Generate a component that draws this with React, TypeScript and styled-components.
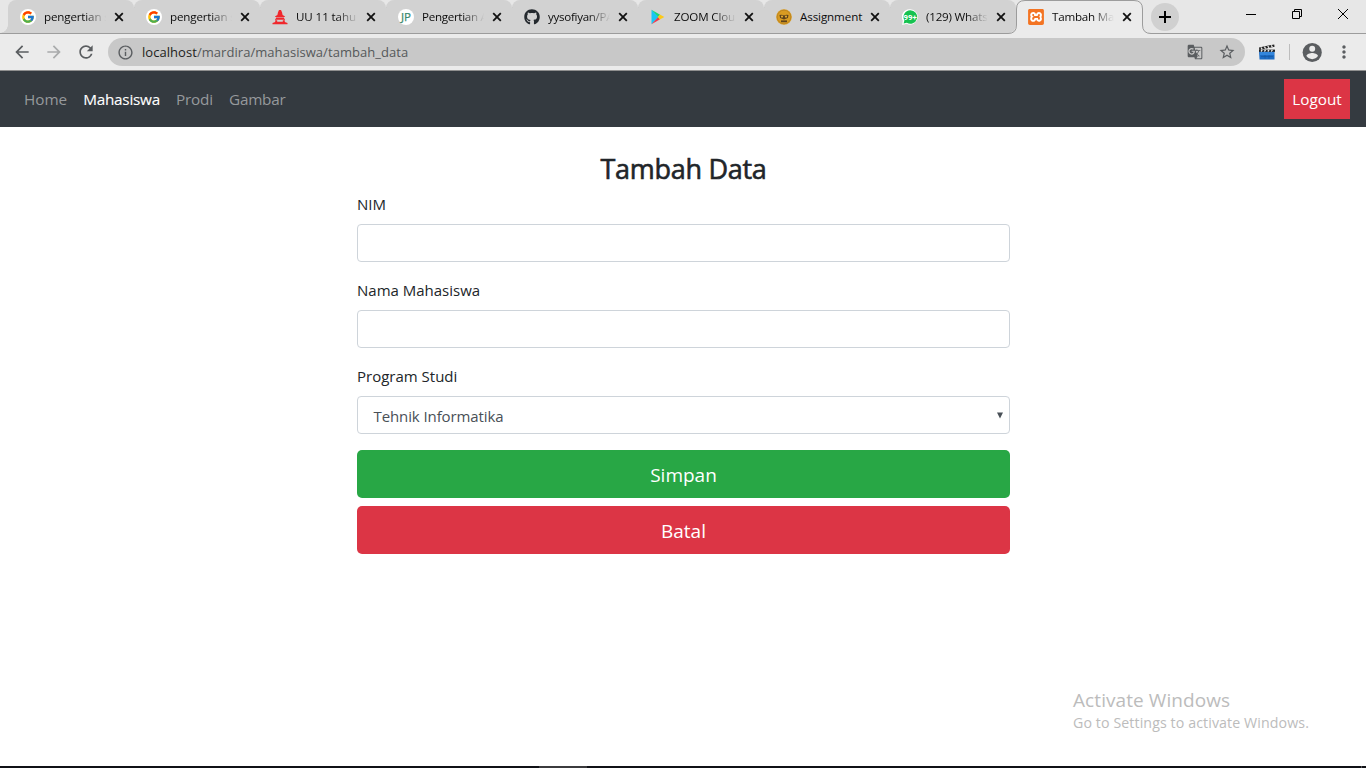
import React from "react";
import styled, { createGlobalStyle, css } from "styled-components";
import { FcGoogle } from "react-icons/fc";
import { FaGithub } from "react-icons/fa";
import { SiXampp } from "react-icons/si";
import {
  MdArrowBack,
  MdArrowForward,
  MdRefresh,
  MdInfoOutline,
  MdStarBorder,
  MdMoreVert,
  MdGTranslate,
} from "react-icons/md";

const GlobalStyle = createGlobalStyle`
  * { box-sizing: border-box; }
  body {
    margin: 0;
    background: #fff;
    font-family: "Open Sans", "Noto Sans", sans-serif;
    overflow: hidden;
  }
  svg { flex: none; }
`;

const Screen = styled.div`
  position: relative;
  display: flex;
  flex-direction: column;
  width: 1366px;
  height: 768px;
`;

const TabStrip = styled.div`
  display: flex;
  height: 34px;
  padding-left: 8px;
  background: #e7e7e7;
  border-bottom: 1px solid #9c9c9c;
`;

const Tab = styled.div<{ $active?: boolean; $first?: boolean; $last?: boolean }>`
  position: relative;
  display: flex;
  align-items: center;
  flex: none;
  width: 126px;
  height: 33px;
  padding-left: 12px;
  background: #d2d2d2;
  border-radius: 8px 8px 0 0;
  ${(p) =>
    p.$first &&
    css`
      &::before {
        content: "";
        position: absolute;
        left: -8px;
        bottom: 0;
        width: 8px;
        height: 8px;
        background: radial-gradient(circle at 0 0, transparent 7.5px, #d2d2d2 8px);
      }
    `}
  ${(p) =>
    p.$last &&
    css`
      border-radius: 8px 8px 8px 0;
    `}
  ${(p) =>
    p.$active &&
    css`
      height: 34px;
      padding-bottom: 1px;
      background: none;
    `}
`;

const TabSeparator = styled.span`
  position: absolute;
  right: -1px;
  top: 7px;
  width: 1px;
  height: 20px;
  background: #828282;
`;

const TabShape = styled.svg`
  position: absolute;
  left: -8px;
  top: 0;
`;

const Favicon = styled.span`
  position: relative;
  display: flex;
  align-items: center;
  justify-content: center;
  flex: none;
  width: 16px;
  height: 16px;
  margin-right: 8px;
`;

const CloseButton = styled.span`
  position: relative;
  display: flex;
  flex: none;
`;

const TabTitle = styled.span<{ $track: number; $whole?: boolean }>`
  position: relative;
  flex: none;
  width: ${(p) => (p.$whole ? 64 : 62)}px;
  margin-right: ${(p) => (p.$whole ? 3 : 5)}px;
  overflow: hidden;
  white-space: nowrap;
  font-size: 11.6px;
  line-height: 18px;
  letter-spacing: ${(p) => p.$track}px;
  color: #0c0c0c;
  ${(p) =>
    !p.$whole &&
    css`
      mask-image: linear-gradient(to right, #000 40px, transparent 62px);
    `}
`;

const NewTab = styled.div`
  display: flex;
  align-items: center;
  justify-content: center;
  width: 28px;
  height: 28px;
  margin: 3px 0 0 9px;
  border-radius: 50%;
  background: #d0d0d0;
`;

const WindowControls = styled.div`
  display: flex;
  gap: 36px;
  margin: 9px 18px 0 auto;
`;

const Toolbar = styled.div`
  display: flex;
  align-items: center;
  height: 37px;
  border-bottom: 1px solid #8f8f8f;
  background: #ebebeb;
  color: #5a5d60;
  padding-left: 12px;
`;

const ToolButton = styled.span<{ $dim?: boolean }>`
  display: flex;
  flex: none;
  width: 20px;
  margin-right: 12px;
  font-size: 20px;
  color: ${(p) => (p.$dim ? "#a9abac" : "#5a5d60")};
`;

const Omnibox = styled.div`
  display: flex;
  align-items: center;
  flex: none;
  width: 1137px;
  height: 28px;
  margin-right: 14px;
  padding: 0 9px 0 9px;
  border-radius: 14px;
  background: #c8c8c8;
`;

const OmniboxActions = styled.span`
  display: flex;
  align-items: center;
  gap: 15px;
`;

const Url = styled.span`
  flex: 1;
  margin-left: 8px;
  font-size: 13px;
  letter-spacing: 0.05px;
  color: #55585a;
  span {
    color: #1d1e20;
  }
`;

const ToolDivider = styled.span`
  width: 1px;
  height: 16px;
  margin: 0 11px 0 14px;
  background: #bdbdbd;
`;

const Profile = styled.span`
  display: flex;
  margin-right: 10px;
`;

const Navbar = styled.nav`
  display: flex;
  align-items: center;
  height: 56px;
  padding: 0 16px;
  background: #343a40;
`;

const NavLink = styled.a<{ $active?: boolean; $track: number }>`
  margin-left: 8px;
  margin-right: 8px;
  font-size: 15.3px;
  line-height: 24px;
  letter-spacing: ${(p) => p.$track}px;
  color: ${(p) => (p.$active ? "#fff" : "#96999c")};
  -webkit-text-stroke: ${(p) => (p.$active ? "0.12px #fff" : "0")};
`;

const Logout = styled.button`
  width: 66px;
  height: 40px;
  margin-left: auto;
  padding: 0;
  border: 0;
  background: #dc3545;
  color: #fff;
  font: 15.3px/24px "Open Sans", sans-serif;
`;

const Form = styled.form`
  width: 653px;
  margin: 24px 0 0 357px;
`;

const Title = styled.h3`
  margin: 0;
  height: 41px;
  padding-top: 1px;
  text-align: center;
  font-size: 27px;
  line-height: 34px;
  font-weight: 500;
  letter-spacing: -0.3px;
  -webkit-text-stroke: 0.6px #212529;
  color: #212529;
`;

const Field = styled.div`
  margin-bottom: 16px;
`;

const Label = styled.label`
  display: block;
  height: 24px;
  margin-bottom: 8px;
  font-size: 15px;
  line-height: 25px;
  color: #212529;
`;

const Control = styled.div`
  display: flex;
  align-items: center;
  justify-content: space-between;
  height: 38px;
  padding: 2px 5px 0 15.5px;
  border: 1px solid #ced4da;
  border-radius: 4px;
  background: #fff;
  font-size: 15px;
  letter-spacing: -0.1px;
  color: #495057;
`;

const BlockButton = styled.button<{ $color: string }>`
  display: block;
  width: 100%;
  height: 48px;
  margin-bottom: 8px;
  padding: 2px 0 0;
  border: 0;
  border-radius: 5px;
  background: ${(p) => p.$color};
  color: #fff;
  font-family: "Open Sans", sans-serif;
  font-size: 19px;
`;

const Watermark = styled.div`
  position: absolute;
  left: 1073px;
  top: 687px;
  color: #bcbcbc;
`;

const WatermarkTitle = styled.div`
  width: max-content;
  font-size: 19px;
  line-height: 26px;
  letter-spacing: 0.08px;
`;

const WatermarkText = styled.div`
  width: max-content;
  font-size: 14.2px;
  line-height: 19px;
  letter-spacing: 0.1px;
`;

const Taskbar = styled.div`
  display: flex;
  height: 2px;
  margin-top: auto;
  padding-left: 539px;
  background: #101116;
`;

const TaskbarItem = styled.span`
  width: 48px;
  background: #3b3b3d;
`;

const ShowDesktop = styled.span`
  width: 1px;
  margin: 0 4px 0 auto;
  background: #55565a;
`;

const CloseGlyph = () => (
  <CloseButton>
    <svg width="16" height="16" viewBox="0 0 16 16">
      <path d="M4.2 4.2l7.6 7.6M11.8 4.2l-7.6 7.6" stroke="#111" strokeWidth="1.8" />
    </svg>
  </CloseButton>
);

const GoogleMark = () => (
  <svg width="16" height="16" viewBox="0 0 16 16">
    <circle cx="8" cy="8" r="8" fill="#fff" />
    <FcGoogle x="1" y="1" size={14} />
  </svg>
);

const PagodaMark = () => (
  <svg width="16" height="16" viewBox="0 0 16 16" fill="#f0272c">
    <path d="M7 1h2l1 2.200.6 2.800 2.200 1.200v.8H3.200v-.8L5.400 6 6 3.200z" />
    <path d="M4 8.500h8v1.200h1v1H3v-1h1zM3.200 11.200h2v1.600h5.600v-1.600h2v1.800l2.700 1v1.200H.5V14l2.700-1z" />
  </svg>
);

const JpMark = () => (
  <svg width="16" height="16" viewBox="0 0 16 16">
    <circle cx="8" cy="8" r="8" fill="#fff" />
    <text x="8" y="12" textAnchor="middle" fontSize="11.500" fontFamily="Open Sans" fill="#3d8b70" stroke="#3d8b70" strokeWidth=".25">JP</text>
  </svg>
);

const PlayMark = () => (
  <svg width="16" height="16" viewBox="0 0 16 16">
    <path d="M1.500.8v14.400L8.500 8z" fill="#19c5f4" />
    <path d="M1.500.8l8.600 5L8.200 8z" fill="#16d77c" />
    <path d="M1.500 15.200l8.600-5L8.200 8z" fill="#f0384b" />
    <path d="M9.900 5.600L14.300 8l-4.400 2.400L7.800 8z" fill="#fcc917" />
  </svg>
);

const OwlMark = () => (
  <svg width="16" height="16" viewBox="0 0 16 16">
    <circle cx="8" cy="8" r="7.800" fill="#d89b22" />
    <circle cx="8" cy="8" r="6.800" fill="none" stroke="#b98120" strokeWidth=".8" />
    <path d="M3.500 6q2.500-.8 4.500.6 2-1.400 4.500-.6l-.6 3-3.900 1.600L4.100 9z" fill="#5e431b" />
    <circle cx="6" cy="7.600" r="1.100" fill="#e6ac31" />
    <circle cx="10" cy="7.600" r="1.100" fill="#e6ac31" />
    <path d="M5 12.300h6" stroke="#5e431b" strokeWidth="1.800" />
  </svg>
);

const WhatsMark = () => (
  <svg width="16" height="16" viewBox="0 0 16 16">
    <path d="M8.200.2a7.700 7.700 0 1 1-3.600 14.600L.2 16l.6-4.400A7.700 7.700 0 0 1 8.200.2z" fill="#fff" />
    <path d="M8.200 1.200a6.800 6.800 0 1 1-3.400 12.600L1.600 14.600l.8-3.200A6.800 6.800 0 0 1 8.200 1.200z" fill="#16c250" />
    <text x="8.200" y="10.800" textAnchor="middle" fontSize="7.800" fontWeight="700" fontFamily="Roboto" fill="#fff">99+</text>
  </svg>
);

const XamppMark = () => (
  <svg width="16" height="16" viewBox="0 0 16 16">
    <rect x=".5" y=".5" width="15" height="15" rx="1" fill="#fff" />
    <SiXampp size={16} color="#f37423" />
  </svg>
);

const ClapperIcon = () => (
  <svg width="16" height="16" viewBox="0 0 16 16">
    <path d="M0 7h15.500v8.600H.5z" fill="#1d6cc4" />
    <path d="M1 8h14v3H1z" fill="#3386dc" />
    <path d="M0 3.600L15.200.4l.4 2.400L.4 6z" fill="#222" />
    <path d="M0 5.600h16v2.200H0z" fill="#222" />
    <path d="M2 3.500l1.200 1.800M5.400 2.700l1.200 1.900M8.800 2l1.200 1.900M12.200 1.300l1.200 1.800M2 7.500l1.200-1.600M5.400 7.500l1.200-1.600M8.800 7.500L10 5.900M12.200 7.500l1.200-1.600" stroke="#e9e9e9" strokeWidth="1.300" />
    <path d="M2 12.500h12M6 11v3.500M10 11v3.500" stroke="#15559e" strokeWidth=".6" />
  </svg>
);

const AvatarIcon = () => (
  <svg width="23" height="23" viewBox="0 0 24 24">
    <circle cx="11.700" cy="12" r="10" fill="#5a5d60" />
    <circle cx="11.700" cy="8" r="3.100" fill="#ebebeb" />
    <path d="M5.700 15.700c0-2 4-3.100 6-3.100s6 1.100 6 3.100a7.200 7.200 0 0 1-12 0z" fill="#ebebeb" />
  </svg>
);

const tabs = [
  { title: "pengertian s", track: -0.15, icon: <GoogleMark /> },
  { title: "pengertian s", track: -0.15, icon: <GoogleMark /> },
  { title: "UU 11 tahu", track: -0.1, icon: <PagodaMark /> },
  { title: "Pengertian A", track: -0.3, icon: <JpMark /> },
  { title: "yysofiyan/PA", track: -0.3, icon: <FaGithub size={16} color="#24292e" /> },
  { title: "ZOOM Clou", track: -0.15, icon: <PlayMark /> },
  { title: "Assignment", track: -0.1, icon: <OwlMark />, whole: true },
  { title: "(129) Whats", track: -0.2, icon: <WhatsMark /> },
];

export default function App() {
  return (
    <Screen>
      <GlobalStyle />
      <TabStrip>
        {tabs.map((t, i) => (
          <Tab key={i} $first={i === 0} $last={i === tabs.length - 1}>
            <Favicon>{t.icon}</Favicon>
            <TabTitle $track={t.track} $whole={t.whole}>{t.title}</TabTitle>
            <CloseGlyph />
            {i < tabs.length - 1 && <TabSeparator />}
          </Tab>
        ))}
        <Tab $active>
          <TabShape width="143" height="34">
            <path d="M0 34v-.5Q8.500 33.500 8.500 25V9Q8.500.5 17 .5h109q8.500 0 8.500 8.500v16q0 8.500 8.500 8.500v.5z" fill="#ebebeb" />
            <path d="M0 33.500Q8.500 33.500 8.500 25V9Q8.500.5 17 .5h109q8.500 0 8.500 8.500v16q0 8.500 8.500 8.500" fill="none" stroke="#9c9c9c" />
          </TabShape>
          <Favicon><XamppMark /></Favicon>
          <TabTitle $track={-0.2}>Tambah Ma</TabTitle>
          <CloseGlyph />
        </Tab>
        <NewTab>
          <svg width="14" height="14"><path d="M7 1v12M1 7h12" stroke="#000" strokeWidth="2" /></svg>
        </NewTab>
        <WindowControls>
          <svg width="10" height="11"><path d="M0 5.500h10" stroke="#000" /></svg>
          <svg width="10" height="11"><path d="M.5 2.500h7v7h-7zM2.500 2.500v-2h7v7h-2" fill="none" stroke="#000" /></svg>
          <svg width="10" height="11"><path d="M0 0l10 10M10 0L0 10" stroke="#000" /></svg>
        </WindowControls>
      </TabStrip>
      <Toolbar>
        <ToolButton><MdArrowBack /></ToolButton>
        <ToolButton $dim><MdArrowForward /></ToolButton>
        <ToolButton><MdRefresh /></ToolButton>
        <Omnibox>
          <MdInfoOutline size={17} />
          <Url><span>localhost</span>/mardira/mahasiswa/tambah_data</Url>
          <OmniboxActions>
            <MdGTranslate size={16} />
            <MdStarBorder size={18} />
          </OmniboxActions>
        </Omnibox>
        <ClapperIcon />
        <ToolDivider />
        <Profile><AvatarIcon /></Profile>
        <MdMoreVert size={20} />
      </Toolbar>
      <Navbar>
        <NavLink $track={-0.03}>Home</NavLink>
        <NavLink $active $track={-0.23}>Mahasiswa</NavLink>
        <NavLink $track={-0.18}>Prodi</NavLink>
        <NavLink $track={-0.23}>Gambar</NavLink>
        <Logout>Logout</Logout>
      </Navbar>
      <Form>
        <Title>Tambah Data</Title>
        <Field><Label>NIM</Label><Control /></Field>
        <Field><Label>Nama Mahasiswa</Label><Control /></Field>
        <Field>
          <Label>Program Studi</Label>
          <Control>
            <span>Tehnik Informatika</span>
            <svg width="8" height="8"><path d="M1 .5h6L4 6.500z" fill="#495057" /></svg>
          </Control>
        </Field>
        <BlockButton type="button" $color="#28a745">Simpan</BlockButton>
        <BlockButton type="button" $color="#dc3545">Batal</BlockButton>
      </Form>
      <Watermark>
        <WatermarkTitle>Activate Windows</WatermarkTitle>
        <WatermarkText>Go to Settings to activate Windows.</WatermarkText>
      </Watermark>
      <Taskbar><TaskbarItem /><ShowDesktop /></Taskbar>
    </Screen>
  );
}
